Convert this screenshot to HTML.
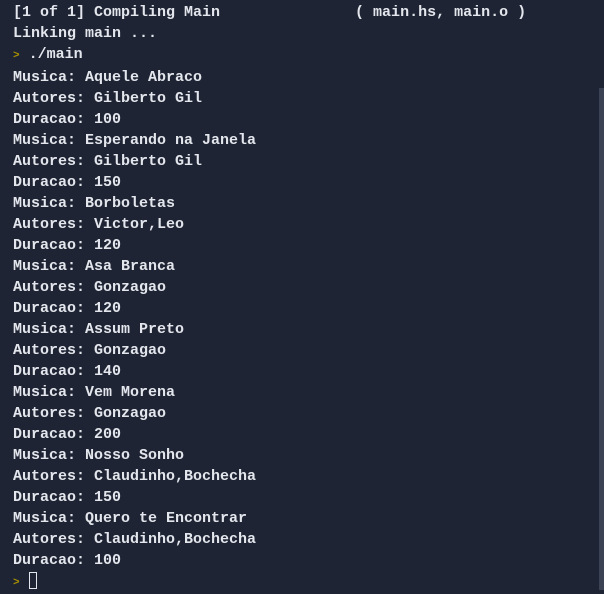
<!DOCTYPE html>
<html><head><style>
html,body{margin:0;padding:0;}
body{width:604px;height:590px;background:#1e2433;overflow:hidden;position:relative;}
pre{margin:0;position:absolute;left:13px;top:2px;font-family:"Liberation Mono",monospace;font-size:15px;line-height:21px;color:#e3e6ec;font-weight:bold;}
.p{color:#a89000;font-size:11px;}
.cur{display:inline-block;width:8px;height:17px;border:1px solid #e3e6ec;vertical-align:-4px;box-sizing:border-box;}
.sb{position:absolute;left:599px;top:88px;width:5px;height:502px;background:#3b4254;}
</style></head><body>
<pre>[1 of 1] Compiling Main               ( main.hs, main.o )
Linking main ...
<span class="p">&gt;</span> ./main
Musica: Aquele Abraco
Autores: Gilberto Gil
Duracao: 100
Musica: Esperando na Janela
Autores: Gilberto Gil
Duracao: 150
Musica: Borboletas
Autores: Victor,Leo
Duracao: 120
Musica: Asa Branca
Autores: Gonzagao
Duracao: 120
Musica: Assum Preto
Autores: Gonzagao
Duracao: 140
Musica: Vem Morena
Autores: Gonzagao
Duracao: 200
Musica: Nosso Sonho
Autores: Claudinho,Bochecha
Duracao: 150
Musica: Quero te Encontrar
Autores: Claudinho,Bochecha
Duracao: 100
<span class="p">&gt;</span> <span class="cur"></span></pre>
<div class="sb"></div>
</body></html>
